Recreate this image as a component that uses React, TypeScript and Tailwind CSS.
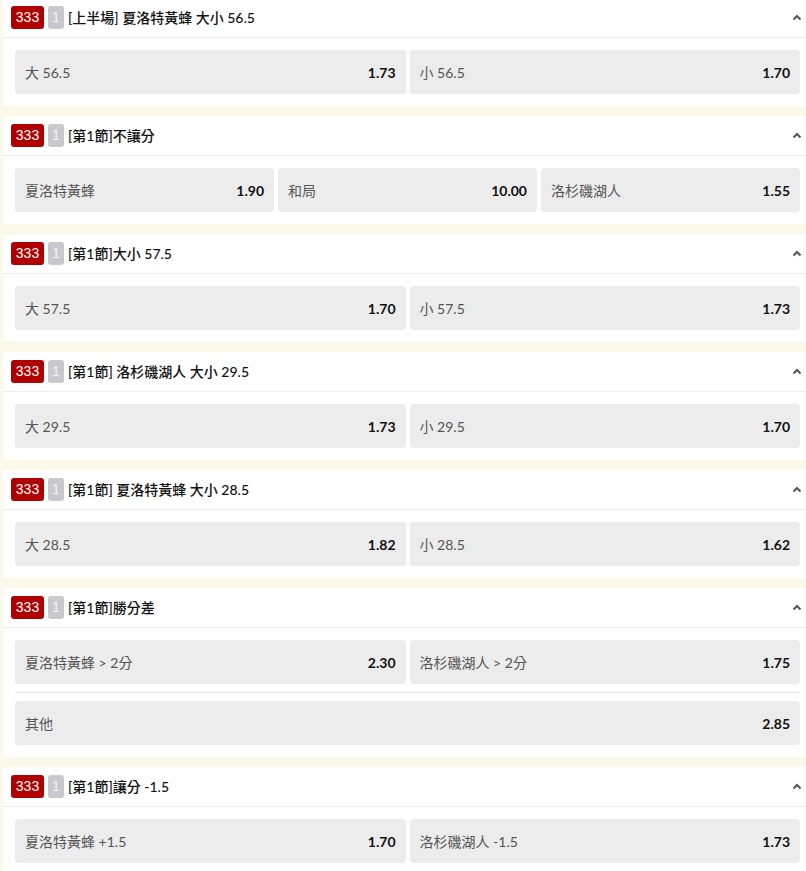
import React from "react";

type Opt = { label: string; odds: string };
type Market = { title: string; rows: Opt[][] };

const markets: Market[] = [
  { title: "[上半場] 夏洛特黃蜂 大小 56.5", rows: [[{ label: "大 56.5", odds: "1.73" }, { label: "小 56.5", odds: "1.70" }]] },
  { title: "[第1節]不讓分", rows: [[{ label: "夏洛特黃蜂", odds: "1.90" }, { label: "和局", odds: "10.00" }, { label: "洛杉磯湖人", odds: "1.55" }]] },
  { title: "[第1節]大小 57.5", rows: [[{ label: "大 57.5", odds: "1.70" }, { label: "小 57.5", odds: "1.73" }]] },
  { title: "[第1節] 洛杉磯湖人 大小 29.5", rows: [[{ label: "大 29.5", odds: "1.73" }, { label: "小 29.5", odds: "1.70" }]] },
  { title: "[第1節] 夏洛特黃蜂 大小 28.5", rows: [[{ label: "大 28.5", odds: "1.82" }, { label: "小 28.5", odds: "1.62" }]] },
  { title: "[第1節]勝分差", rows: [[{ label: "夏洛特黃蜂 > 2分", odds: "2.30" }, { label: "洛杉磯湖人 > 2分", odds: "1.75" }], [{ label: "其他", odds: "2.85" }]] },
  { title: "[第1節]讓分 -1.5", rows: [[{ label: "夏洛特黃蜂 +1.5", odds: "1.70" }, { label: "洛杉磯湖人 -1.5", odds: "1.73" }]] },
];

const font = { fontFamily: 'Lato, "Noto Sans CJK TC", sans-serif' };

function OddBtn({ o }: { o: Opt }) {
  return (
    <div className="h-[44px] rounded-[4px] bg-[#ececec] flex items-center justify-between pl-[10px] pr-[10px]">
      <span className="text-[14px] text-[#555555]">{o.label}</span>
      <span className="text-[14px] font-bold text-[#111111]">{o.odds}</span>
    </div>
  );
}

function Card({ m }: { m: Market }) {
  return (
    <div className="ml-[3px] bg-white">
      <div className="h-[40px] border-b border-[#eeeeee] flex items-center pl-2 pr-1">
        <span
          className="h-[23px] w-[33px] rounded-[3px] bg-[#b00000] text-white text-[14px] flex items-center justify-center"
          style={{ fontFamily: '"Liberation Sans", Arial, sans-serif' }}
        >
          333
        </span>
        <span
          className="ml-1 h-[23px] w-[16px] rounded-[3px] bg-[#c9c9cd] text-[#f4f4f4] text-[14px] flex items-center justify-center"
          style={{ fontFamily: '"Liberation Sans", Arial, sans-serif' }}
        >
          1
        </span>
        <span className="ml-1 text-[14px] font-medium text-[#111111] flex-1">{m.title}</span>
        <svg width="10" height="7" viewBox="0 0 10 7">
          <polyline points="1.5,5.5 5,2 8.5,5.5" fill="none" stroke="#555" strokeWidth="2" />
        </svg>
      </div>
      <div className="pl-3 pr-[6px] pt-3 pb-3">
        {m.rows.map((row, i) => (
          <React.Fragment key={i}>
            {i > 0 && <div className="my-2 border-t border-[#e6e6e6]" />}
            <div className={row.length === 3 ? "grid grid-cols-3 gap-1" : row.length === 2 ? "grid grid-cols-2 gap-1" : "grid grid-cols-1"}>
              {row.map((o, j) => (
                <OddBtn key={j} o={o} />
              ))}
            </div>
          </React.Fragment>
        ))}
      </div>
    </div>
  );
}

export default function App() {
  return (
    <div className="min-h-[871px] w-[806px] bg-[#fcf9ea] overflow-hidden" style={font}>
      <div className="-mt-[2px] flex flex-col gap-[10px]">
        {markets.map((m, i) => (
          <Card key={i} m={m} />
        ))}
      </div>
    </div>
  );
}
